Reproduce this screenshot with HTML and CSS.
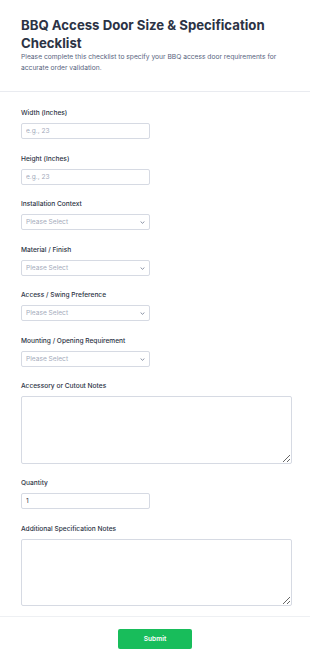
FILE: index.html
```html
<!DOCTYPE html>
<html>
	<head>
		<meta charset="utf-8" />
		<title>BBQ Access Door Size &amp; Specification Checklist</title>
		<link rel="stylesheet" href="styles.css">
	</head>
	<body>
		<form class="form">
			<div class="header">
				<h1 class="title">BBQ Access Door Size &amp; Specification Checklist</h1>
				<p class="subtitle">Please complete this checklist to specify your BBQ access door requirements for accurate order validation.</p>
			</div>
			<div class="fields">
				<div class="field">
					<label class="label">Width (Inches)</label>
					<input class="control short" type="text" placeholder="e.g., 23" />
				</div>
				<div class="field">
					<label class="label">Height (Inches)</label>
					<input class="control short" type="text" placeholder="e.g., 23" />
				</div>
				<div class="field">
					<label class="label">Installation Context</label>
					<div class="select-wrap">
						<select class="control select"><option>Please Select</option></select>
						<svg class="chevron" width="5" height="3" viewBox="0 0 5 3"><path d="M0.6 0.5 L2.5 2.3 L4.4 0.5" fill="none" stroke="#7b8498" stroke-width="0.9"/></svg>
					</div>
				</div>
				<div class="field">
					<label class="label">Material / Finish</label>
					<div class="select-wrap">
						<select class="control select"><option>Please Select</option></select>
						<svg class="chevron" width="5" height="3" viewBox="0 0 5 3"><path d="M0.6 0.5 L2.5 2.3 L4.4 0.5" fill="none" stroke="#7b8498" stroke-width="0.9"/></svg>
					</div>
				</div>
				<div class="field">
					<label class="label">Access / Swing Preference</label>
					<div class="select-wrap">
						<select class="control select"><option>Please Select</option></select>
						<svg class="chevron" width="5" height="3" viewBox="0 0 5 3"><path d="M0.6 0.5 L2.5 2.3 L4.4 0.5" fill="none" stroke="#7b8498" stroke-width="0.9"/></svg>
					</div>
				</div>
				<div class="field">
					<label class="label">Mounting / Opening Requirement</label>
					<div class="select-wrap">
						<select class="control select"><option>Please Select</option></select>
						<svg class="chevron" width="5" height="3" viewBox="0 0 5 3"><path d="M0.6 0.5 L2.5 2.3 L4.4 0.5" fill="none" stroke="#7b8498" stroke-width="0.9"/></svg>
					</div>
				</div>
				<div class="field">
					<label class="label">Accessory or Cutout Notes</label>
					<textarea class="control area"></textarea>
				</div>
				<div class="field">
					<label class="label">Quantity</label>
					<input class="control short filled" type="text" value="1" />
				</div>
				<div class="field last">
					<label class="label">Additional Specification Notes</label>
					<textarea class="control area"></textarea>
				</div>
			</div>
			<div class="footer">
				<button class="submit" type="button">Submit</button>
			</div>
		</form>
	</body>
</html>
```

FILE: styles.css
```css
*{
	margin: 0;
	padding: 0;
	box-sizing: border-box;
}
body{
	background: #fff;
	font-family: Inter, "Liberation Sans", sans-serif;
	color: #2c3345;
}
.header{
	padding: 16px 21px 17px;
	border-bottom: 1px solid #e9ebf0;
}
.title{
	font-size: 13.2px;
	line-height: 18px;
	font-weight: 700;
	color: #2c3345;
}
.subtitle{
	font-size: 6.7px;
	line-height: 11px;
	color: #57647e;
}
.fields{
	padding: 16px 21px 10px;
	display: flex;
	flex-direction: column;
}
.field{
	display: flex;
	flex-direction: column;
	gap: 5px;
	margin-bottom: 14.5px;
}
.field.last{
	margin-bottom: 0;
}
.label{
	font-size: 6.6px;
	line-height: 10px;
	font-weight: 500;
	color: #2c3345;
}
.control{
	display: block;
	font-family: Inter, "Liberation Sans", sans-serif;
	font-size: 6.6px;
	color: #2c3345;
	border: 1px solid #d6dae3;
	border-radius: 2px;
	background: #fff;
	padding: 0 4px;
	outline: none;
}
.short{
	width: 129px;
	height: 16px;
}
.control::placeholder{
	color: #a4abbb;
}
.select-wrap{
	position: relative;
	width: 129px;
	height: 16px;
}
.select{
	appearance: none;
	width: 129px;
	height: 16px;
	color: #a4abbb;
}
.chevron{
	position: absolute;
	right: 5px;
	top: 7px;
}
.area{
	width: 271px;
	height: 67.5px;
	padding: 4px;
	resize: vertical;
}
.footer{
	border-top: 1px solid #eef0f3;
	padding: 12px 0 17px;
	display: flex;
	justify-content: center;
}
.submit{
	width: 74px;
	height: 20px;
	background: #18bd5b;
	border: none;
	border-radius: 2px;
	color: #fff;
	font-family: Inter, "Liberation Sans", sans-serif;
	font-size: 6.6px;
	font-weight: 600;
}
```
